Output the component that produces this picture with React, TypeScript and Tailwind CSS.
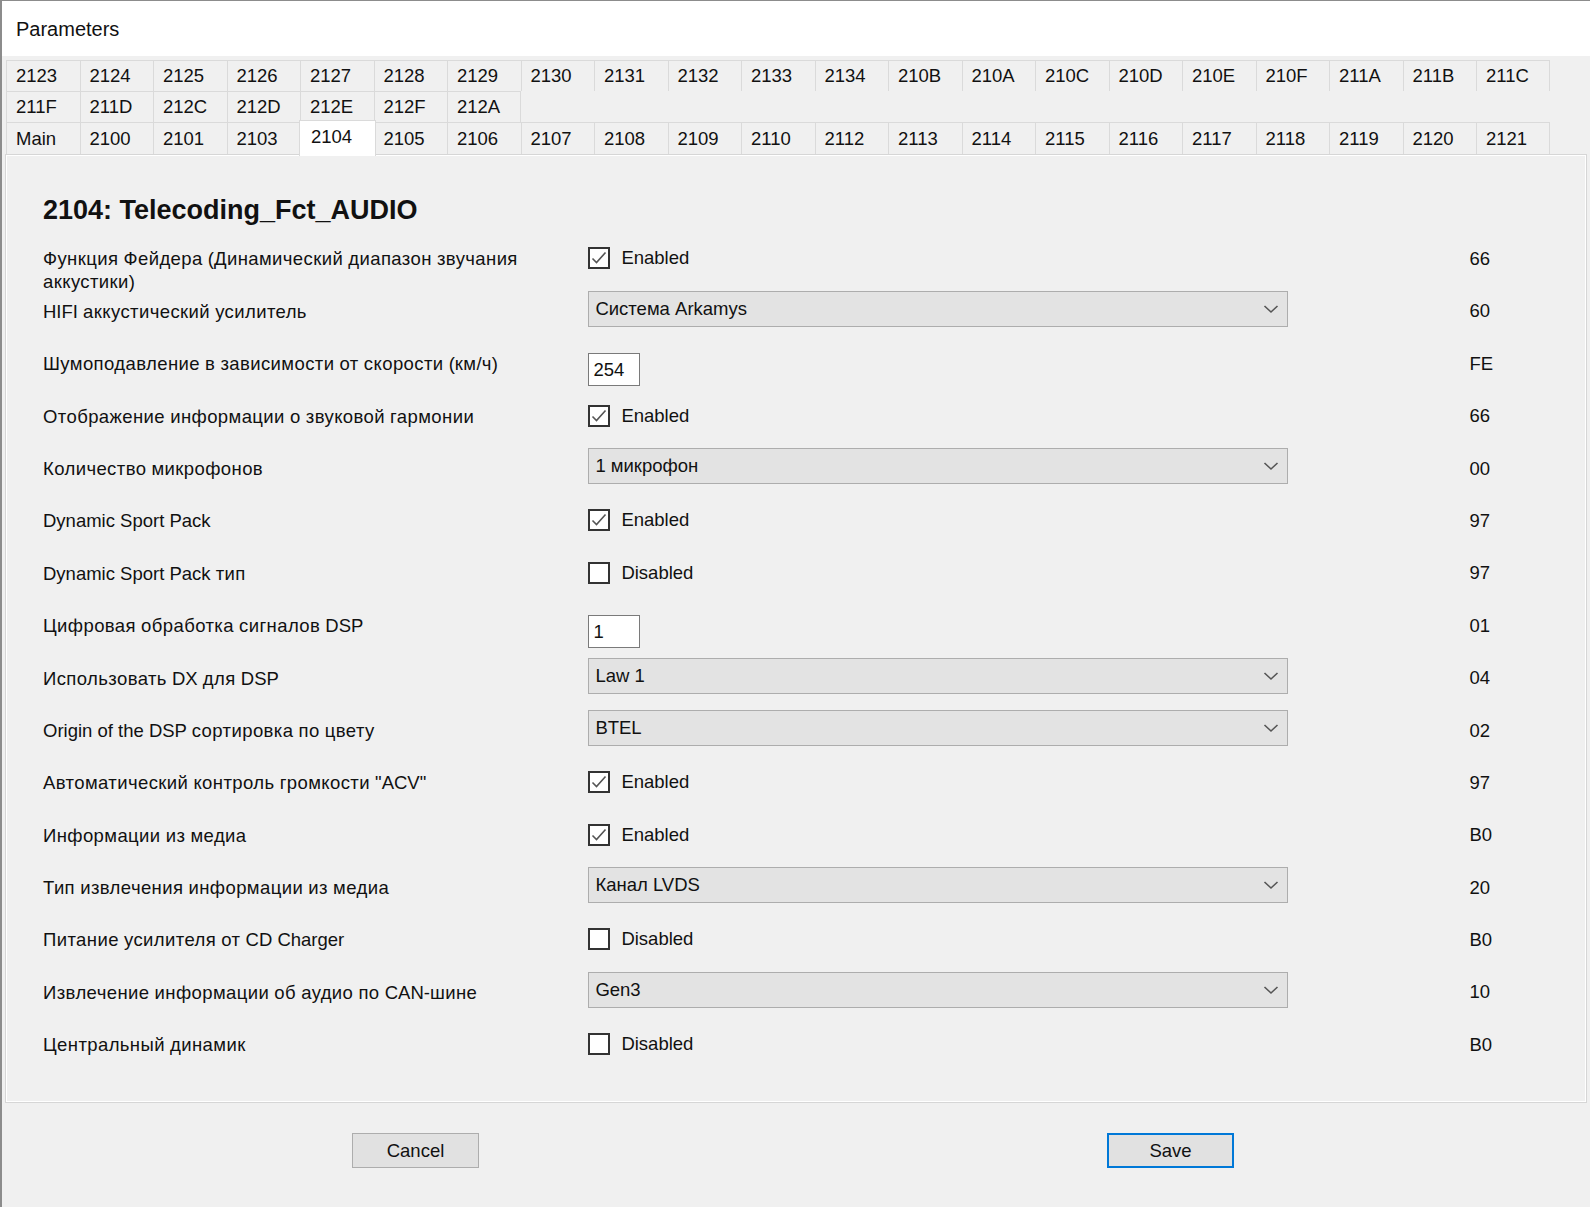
import React from "react";

type Row = {
  label: string;
  kind: "check" | "select" | "text";
  value: string;
  on?: boolean;
  code: string;
};

const tabRows: string[][] = [
  ["2123", "2124", "2125", "2126", "2127", "2128", "2129", "2130", "2131", "2132", "2133", "2134", "210B", "210A", "210C", "210D", "210E", "210F", "211A", "211B", "211C"],
  ["211F", "211D", "212C", "212D", "212E", "212F", "212A"],
  ["Main", "2100", "2101", "2103", "2104", "2105", "2106", "2107", "2108", "2109", "2110", "2112", "2113", "2114", "2115", "2116", "2117", "2118", "2119", "2120", "2121"],
];

const rows: Row[] = [
  { label: "Функция Фейдера (Динамический диапазон звучания\nаккустики)", kind: "check", value: "Enabled", on: true, code: "66" },
  { label: "HIFI аккустический усилитель", kind: "select", value: "Система Arkamys", code: "60" },
  { label: "Шумоподавление в зависимости от скорости (км/ч)", kind: "text", value: "254", code: "FE" },
  { label: "Отображение информации о звуковой гармонии", kind: "check", value: "Enabled", on: true, code: "66" },
  { label: "Количество микрофонов", kind: "select", value: "1 микрофон", code: "00" },
  { label: "Dynamic Sport Pack", kind: "check", value: "Enabled", on: true, code: "97" },
  { label: "Dynamic Sport Pack тип", kind: "check", value: "Disabled", on: false, code: "97" },
  { label: "Цифровая обработка сигналов DSP", kind: "text", value: "1", code: "01" },
  { label: "Использовать DX для DSP", kind: "select", value: "Law 1", code: "04" },
  { label: "Origin of the DSP сортировка по цвету", kind: "select", value: "BTEL", code: "02" },
  { label: "Автоматический контроль громкости \"ACV\"", kind: "check", value: "Enabled", on: true, code: "97" },
  { label: "Информации из медиа", kind: "check", value: "Enabled", on: true, code: "B0" },
  { label: "Тип извлечения информации из медиа", kind: "select", value: "Канал LVDS", code: "20" },
  { label: "Питание усилителя от CD Charger", kind: "check", value: "Disabled", on: false, code: "B0" },
  { label: "Извлечение информации об аудио по CAN-шине", kind: "select", value: "Gen3", code: "10" },
  { label: "Центральный динамик", kind: "check", value: "Disabled", on: false, code: "B0" },
];

// the labels' cyrillic runs are a touch wider than in Arial
function Label({ text }: { text: string }) {
  const parts = text.split(/([А-Яа-яЁё]+)/);
  return (
    <>
      {parts.map((p, i) =>
        /[А-Яа-яЁё]/.test(p) ? (
          <span key={i} className="tracking-[0.4px]">
            {p}
          </span>
        ) : (
          <React.Fragment key={i}>{p}</React.Fragment>
        )
      )}
    </>
  );
}

function Tab({ name, last, selected }: { name: string; last: boolean; selected: boolean }) {
  return (
    <div
      className={
        "relative flex h-full w-[73.5px] shrink-0 items-center border-l border-t border-[#dadada] pl-[9px] " +
        (last ? "border-r" : "")
      }
    >
      {name}
      {selected ? (
        <div className="absolute -left-[2px] -right-[2px] -top-[3px] -bottom-[2px] z-10 flex items-center border border-b-0 border-[#dadada] bg-white pl-[11px] pb-[3px]">
          {name}
        </div>
      ) : null}
    </div>
  );
}

function Checkbox({ on, text }: { on: boolean; text: string }) {
  return (
    <div className="flex items-center gap-[11px] pt-[16px]">
      <span className="flex h-[22px] w-[22px] items-center justify-center border-2 border-[#333] bg-white">
        {on ? (
          <svg width="18" height="18" viewBox="0 0 18 18">
            <path d="M2.5 9.5l4 4 9-10" fill="none" stroke="#555" strokeWidth="1.6" />
          </svg>
        ) : null}
      </span>
      <span className="leading-[22px]">{text}</span>
    </div>
  );
}

function Select({ value }: { value: string }) {
  return (
    <div className="mt-[7px] flex h-[36px] w-[700px] items-center justify-between border border-[#adadad] bg-[#e3e3e3] pl-[6px] pr-[8px]">
      <span>{value}</span>
      <svg width="16" height="10" viewBox="0 0 16 10">
        <path d="M1.5 2l6.5 6 6.5-6" fill="none" stroke="#555" strokeWidth="1.6" />
      </svg>
    </div>
  );
}

export default function App() {
  return (
    <div className="flex h-[1207px] w-[1590px] flex-col border-l-2 border-t border-[#8c8c8c] bg-[#f0f0f0] font-['Liberation_Sans',Arial,sans-serif] text-[18.5px] text-[#111]">
      <div className="flex h-[55px] items-center bg-white pl-[14px] text-[20px]">Parameters</div>

      <div className="pl-[4px] pt-[4px]">
        {tabRows.map((r, i) => (
          <div key={i} className={"flex " + (i === 2 ? "h-[32px]" : "h-[31px]")}>
            {r.map((t, j) => (
              <Tab key={t} name={t} last={j === r.length - 1} selected={t === "2104"} />
            ))}
          </div>
        ))}
      </div>

      <div className="ml-[3px] h-[949px] w-[1582px] border border-[#d6d6d6] pl-[37px] pt-[38px] shadow-[inset_1px_1px_0_#fff,inset_-1px_-1px_0_#fff]">
        <div className="h-[32px] text-[27px] font-bold leading-[34px]">2104: Telecoding_Fct_AUDIO</div>
        <div className="mt-[6.4px]">
          {rows.map((r, i) => (
            <div key={i} className="flex h-[52.4px] items-start">
              <div className="w-[545.4px] shrink-0 whitespace-pre-line pt-[16px] leading-[23px]">
                <Label text={r.label} />
              </div>
              <div className="w-[700px] shrink-0">
                {r.kind === "check" ? <Checkbox on={!!r.on} text={r.value} /> : null}
                {r.kind === "select" ? <Select value={r.value} /> : null}
                {r.kind === "text" ? (
                  <div className="mt-[17px] flex h-[33px] w-[52px] items-center border border-[#7a7a7a] bg-white pl-[4px]">
                    {r.value}
                  </div>
                ) : null}
              </div>
              <div className="ml-[181px] pt-[15.6px] leading-[23px]">{r.code}</div>
            </div>
          ))}
        </div>
      </div>

      <div className="mt-[30px] flex">
        <button className="ml-[350px] h-[35px] w-[127px] border border-[#adadad] bg-[#e1e1e1]">Cancel</button>
        <button className="ml-[628px] h-[35px] w-[127px] border-2 border-[#0078d7] bg-[#e1e1e1]">Save</button>
      </div>
    </div>
  );
}
